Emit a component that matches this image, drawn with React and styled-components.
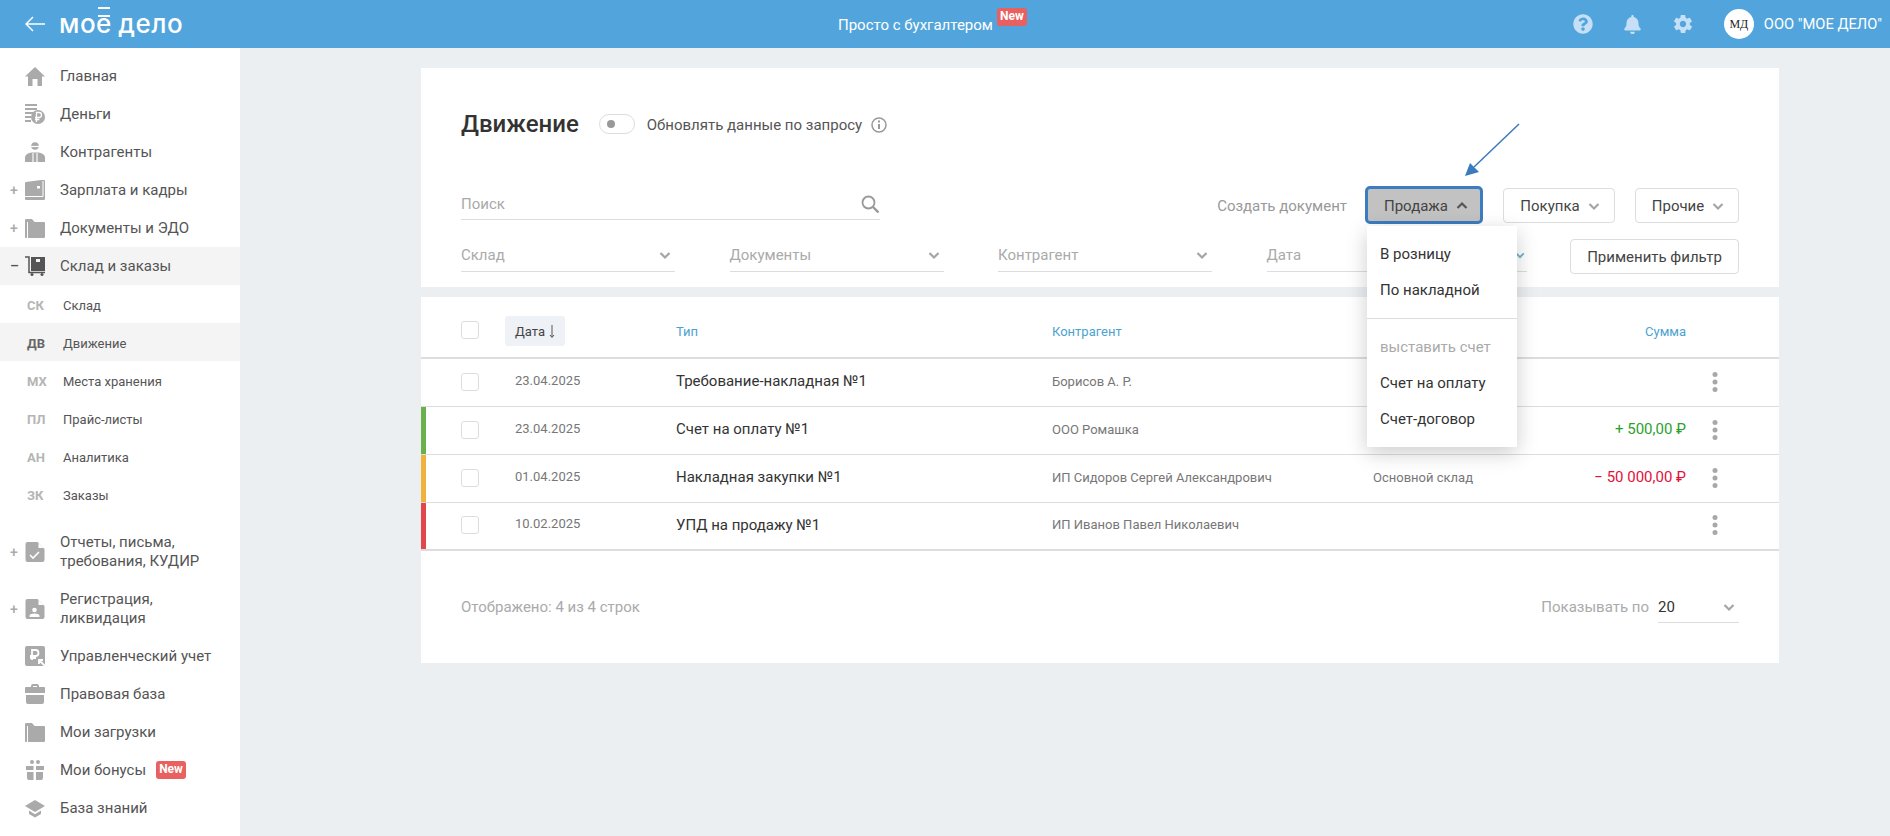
import React from 'react'
import styled, { createGlobalStyle } from 'styled-components'
import { FaQuestionCircle, FaBell } from 'react-icons/fa'
import { IoMdSettings } from 'react-icons/io'

const GlobalStyle = createGlobalStyle`
  * { box-sizing: border-box; }
  html, body { margin: 0; padding: 0; height: 100%; overflow: hidden; }
  body { font-family: Roboto, "Noto Sans", sans-serif; background: #eceff2; color: #333; }
`

const grey = '#aaaaaa'

const navIcons = {
  home: <path d="M10 1 20 10.500h-3V20h-4.500v-7h-5v7H3v-9.500H0z" />,
  money: (
    <>
      <path d="M0 0h12v2H0zM0 4h12v2H0zM0 8h8v2H0zM0 12h6v2H0zM0 16h6v2H0z" />
      <circle cx="13" cy="13" r="7" />
      <path d="M11.500 18v-9.500h2.500a2.500 2.500 0 0 1 0 5H10M10 15.500h4.500" fill="none" stroke="#fff" strokeWidth="1.300" />
    </>
  ),
  person: (
    <>
      <circle cx="10" cy="4" r="3.800" />
      <path d="M6 4.500h8" stroke="#fff" strokeWidth="1.200" />
      <path d="M0 20v-4.500C0 12.500 3.500 11 6.500 10.500h7c3 .5 6.500 2 6.500 5V20z" />
      <path d="M8 11v9M12 11v9" stroke="#fff" strokeWidth="1.100" />
    </>
  ),
  wallet: (
    <>
      <path d="M1 2 16 0h3a1 1 0 0 1 1 1v18a1 1 0 0 1-1 1H1a1 1 0 0 1-1-1V3a1 1 0 0 1 1-1z" />
      <path d="M0 16.500h18V1" fill="none" stroke="#fff" strokeWidth="1" />
      <rect x="12" y="6" width="3" height="2.500" fill="#fff" />
    </>
  ),
  folder: (
    <>
      <path d="M0 2a1 1 0 0 1 1-1h6l2.500 3H19a1 1 0 0 1 1 1v14a1 1 0 0 1-1 1H1a1 1 0 0 1-1-1z" />
      <path d="M2.500 20V4" stroke="#fff" strokeWidth="1" />
    </>
  ),
  cart: (
    <>
      <path d="M0 1h4v15.500h16" fill="none" stroke="#555" strokeWidth="1.500" />
      <path d="M6 1h14v14H6z" fill="#555" />
      <rect x="11" y="3" width="4" height="3" fill="#f4f4f4" />
      <circle cx="7" cy="18.500" r="1.500" fill="#555" />
      <circle cx="17" cy="18.500" r="1.500" fill="#555" />
    </>
  ),
  docCheck: (
    <>
      <path d="M2 0h10l7 7v11a2 2 0 0 1-2 2H2a2 2 0 0 1-2-2V2a2 2 0 0 1 2-2z" transform="translate(.5)" />
      <path d="M13.500 1v5h5z" fill="#fff" />
      <path d="m5 13 3 3 6-6" fill="none" stroke="#fff" strokeWidth="1.600" />
    </>
  ),
  docPerson: (
    <>
      <path d="M2 0h10l7 7v11a2 2 0 0 1-2 2H2a2 2 0 0 1-2-2V2a2 2 0 0 1 2-2z" transform="translate(.5)" />
      <path d="M13.500 1v5h5z" fill="#fff" />
      <circle cx="9.500" cy="11" r="2.300" fill="#fff" />
      <path d="M4.500 18v-1c0-1.800 2.500-2.500 5-2.500s5 .7 5 2.500v1z" fill="#fff" />
    </>
  ),
  ruble: (
    <>
      <rect width="20" height="20" rx="2" />
      <path d="M7 14V4h3.500a3 3 0 0 1 0 6H5M5 12h6" fill="none" stroke="#fff" strokeWidth="1.800" />
      <path d="M20 20 14 14M14 18v-4h4" fill="none" stroke="#fff" strokeWidth="1.800" />
    </>
  ),
  briefcase: (
    <path d="M6 3V2a2 2 0 0 1 2-2h4a2 2 0 0 1 2 2v1h5a1 1 0 0 1 1 1v5H0V4a1 1 0 0 1 1-1zm2 0h4V2H8zM1 11h18v7a2 2 0 0 1-2 2H3a2 2 0 0 1-2-2z" />
  ),
  gift: (
    <>
      <circle cx="7" cy="2" r="2" />
      <circle cx="13" cy="2" r="2" />
      <path d="M1 6h7.500v4H1zM11 6h8v4h-8zM2 12h6.500v8H4a2 2 0 0 1-2-2zM11 12h7v6a2 2 0 0 1-2 2h-5z" />
    </>
  ),
  cap: <path d="M10 2 20 8 10 14 0 8zM4 12.500l6 3.700 6-3.700V16l-6 3.500L4 16z" />,
}

const mainNav = [
  { icon: 'home', label: 'Главная' },
  { icon: 'money', label: 'Деньги' },
  { icon: 'person', label: 'Контрагенты' },
  { icon: 'wallet', label: 'Зарплата и кадры', toggle: '+' },
  { icon: 'folder', label: 'Документы и ЭДО', toggle: '+' },
  { icon: 'cart', label: 'Склад и заказы', toggle: '–', active: true },
]

const subNav = [
  { code: 'СК', label: 'Склад' },
  { code: 'ДВ', label: 'Движение', active: true },
  { code: 'МХ', label: 'Места хранения' },
  { code: 'ПЛ', label: 'Прайс-листы' },
  { code: 'АН', label: 'Аналитика' },
  { code: 'ЗК', label: 'Заказы' },
]

const lowerNav = [
  { icon: 'docCheck', label: 'Отчеты, письма, требования, КУДИР', toggle: '+', tall: true },
  { icon: 'docPerson', label: 'Регистрация, ликвидация', toggle: '+', tall: true },
  { icon: 'ruble', label: 'Управленческий учет' },
  { icon: 'briefcase', label: 'Правовая база' },
  { icon: 'folder', label: 'Мои загрузки' },
  { icon: 'gift', label: 'Мои бонусы', badge: true },
  { icon: 'cap', label: 'База знаний' },
]

const rows = [
  { date: '23.04.2025', type: 'Требование-накладная №1', agent: 'Борисов А. Р.' },
  { date: '23.04.2025', type: 'Счет на оплату №1', agent: 'ООО Ромашка', bar: '#6ab04c', sum: '+ 500,00 ₽', sumColor: '#2ca02c' },
  { date: '01.04.2025', type: 'Накладная закупки №1', agent: 'ИП Сидоров Сергей Александрович', store: 'Основной склад', bar: '#f0b23c', sum: '− 50 000,00 ₽', sumColor: '#e2103c' },
  { date: '10.02.2025', type: 'УПД на продажу №1', agent: 'ИП Иванов Павел Николаевич', bar: '#e2474c' },
]

const Chevron = ({ up, color = '#a5a5a5', size = 12 }) => (
  <svg width={size} height={size} viewBox="0 0 12 12" fill="none" stroke={color} strokeWidth="2.200" style={{ flexShrink: 0 }}>
    <path d={up ? 'M1.500 8 6 3.500 10.500 8' : 'M1.500 4 6 8.500 10.500 4'} />
  </svg>
)

const NavItem = ({ item }) => (
  <NavRow $active={item.active} $tall={item.tall}>
    <Toggle $active={item.active}>{item.toggle}</Toggle>
    <svg width="20" height="20" viewBox="0 0 20 20" fill={grey} style={{ flexShrink: 0 }}>
      {navIcons[item.icon]}
    </svg>
    <NavLabel $tall={item.tall}>{item.label}</NavLabel>
    {item.badge && <NavBadge>New</NavBadge>}
  </NavRow>
)

const App = () => {
  return (
    <>
      <GlobalStyle />
      <Header>
        <Brand>
          <svg width="20" height="16" viewBox="0 0 20 16" fill="none" stroke="#fff" strokeWidth="1.500">
            <path d="M20 8H1M8 1 1 8l7 7" />
          </svg>
          <Logo>мо<LogoE>е</LogoE> дело</Logo>
        </Brand>
        <Promo>
          Просто с бухгалтером
          <PromoBadge>New</PromoBadge>
        </Promo>
        <UserBar>
          <FaQuestionCircle size={20} color="#c5e0f6" />
          <FaBell size={19} color="#c5e0f6" />
          <IoMdSettings size={22} color="#c5e0f6" />
          <User>
            <Avatar>МД</Avatar>
            ООО "МОЕ ДЕЛО"
          </User>
        </UserBar>
      </Header>
      <Layout>
        <Sidebar>
          {mainNav.map((item) => <NavItem key={item.label} item={item} />)}
          {subNav.map((item) => (
            <SubRow key={item.code} $active={item.active}>
              <SubCode $active={item.active}>{item.code}</SubCode>
              {item.label}
            </SubRow>
          ))}
          <LowerNav>
            {lowerNav.map((item) => <NavItem key={item.label} item={item} />)}
          </LowerNav>
        </Sidebar>
        <Main>
          <TopCard>
            <TitleRow>
              <Title>Движение</Title>
              <SwitchTrack />
              <SwitchLabel>Обновлять данные по запросу</SwitchLabel>
              <svg width="16" height="16" viewBox="0 0 16 16" fill="none" stroke="#999" strokeWidth="1.500" style={{ marginTop: 2 }}>
                <circle cx="8" cy="8" r="7" />
                <path d="M8 7v5" strokeWidth="2" />
                <path d="M8 3.500v2" strokeWidth="2" />
              </svg>
            </TitleRow>
            <Toolbar>
              <SearchField>
                Поиск
                <svg width="18" height="18" viewBox="0 0 18 18" fill="none" stroke="#999" strokeWidth="1.800">
                  <circle cx="7.500" cy="7.500" r="6" />
                  <path d="m12 12 5.500 5.500" strokeWidth="2.400" />
                </svg>
              </SearchField>
              <CreateGroup>
                <CreateLabel>Создать документ</CreateLabel>
                <MenuAnchor>
                  <Arrow width="60" height="60" viewBox="0 0 60 60">
                    <path d="M54 6 9 49" fill="none" stroke="#3a7abf" strokeWidth="1.500" />
                    <path d="M0 58 5 45 14 54z" fill="#3a7abf" />
                  </Arrow>
                  <ActionButton $open $width={118}>
                    Продажа
                    <Chevron up color="#555" />
                  </ActionButton>
                  <Dropdown>
                    <MenuItem>В розницу</MenuItem>
                    <MenuItem>По накладной</MenuItem>
                    <MenuDivider />
                    <MenuItem $muted>выставить счет</MenuItem>
                    <MenuItem>Счет на оплату</MenuItem>
                    <MenuItem>Счет-договор</MenuItem>
                  </Dropdown>
                </MenuAnchor>
                <ActionButton $width={112}>Покупка <Chevron /></ActionButton>
                <ActionButton $width={104}>Прочие <Chevron /></ActionButton>
              </CreateGroup>
            </Toolbar>
            <FilterRow>
              <FilterField>Склад <Chevron /></FilterField>
              <FilterField>Документы <Chevron /></FilterField>
              <FilterField>Контрагент <Chevron /></FilterField>
              <FilterField $wide>Дата <Chevron color="#6fb5c9" size={10} /></FilterField>
              <ApplyButton>Применить фильтр</ApplyButton>
            </FilterRow>
          </TopCard>
          <TableCard>
            <HeadRow>
              <Checkbox />
              <div>
                <DatePill>
                  Дата
                  <svg width="8" height="13" viewBox="0 0 8 13" fill="none" stroke="#555" strokeWidth="1">
                    <path d="M4 0v12M2 10l2 2.500L6 10" />
                  </svg>
                </DatePill>
              </div>
              <HeadCell>Тип</HeadCell>
              <HeadCell>Контрагент</HeadCell>
              <StoreSum>
                <HeadCell>Склад</HeadCell>
                <HeadCell>Сумма</HeadCell>
              </StoreSum>
            </HeadRow>
            {rows.map((row, i) => (
              <Row key={row.type} $bar={row.bar} $last={i === rows.length - 1}>
                <Checkbox />
                <DateCell>{row.date}</DateCell>
                <TypeCell>{row.type}</TypeCell>
                <AgentCell>{row.agent}</AgentCell>
                <StoreSum>
                  <AgentCell>{row.store}</AgentCell>
                  <SumCell $color={row.sumColor}>{row.sum}</SumCell>
                </StoreSum>
                <DotsButton>
                  <svg width="6" height="20" viewBox="0 0 6 20" fill="#a8a8a8">
                    <circle cx="3" cy="2.500" r="2.500" />
                    <circle cx="3" cy="10" r="2.500" />
                    <circle cx="3" cy="17.500" r="2.500" />
                  </svg>
                </DotsButton>
              </Row>
            ))}
            <Footer>
              Отображено: 4 из 4 строк
              <PageSize>
                Показывать по
                <PageSelect>20 <Chevron /></PageSelect>
              </PageSize>
            </Footer>
          </TableCard>
        </Main>
      </Layout>
    </>
  )
}

export default App

const Header = styled.header`
  height: 48px;
  background: #52a5dc;
  color: #fff;
  display: grid;
  grid-template-columns: 838px auto 1fr;
  align-items: center;
`

const Brand = styled.div`
  display: flex;
  align-items: center;
  padding-left: 25px;
  gap: 14px;
`

const Logo = styled.span`
  font-family: Inter, sans-serif;
  font-weight: 500;
  font-size: 26px;
  line-height: 32px;
  letter-spacing: 0.5px;
  word-spacing: -1px;
  color: #fff;
`

const LogoE = styled.span`
  position: relative;
  &::before {
    content: '';
    position: absolute;
    left: 2px;
    right: 2px;
    top: -1px;
    height: 6px;
    border-top: 2px solid #fff;
    border-bottom: 2px solid #fff;
  }
`

const Promo = styled.div`
  display: flex;
  font-size: 15px;
  line-height: 24px;
  margin-top: 2px;
  position: relative;
  padding-right: 34px;
`

const PromoBadge = styled.span`
  position: absolute;
  right: 0;
  top: -5px;
  width: 30px;
  height: 18px;
  border-radius: 3px;
  background: #e86060;
  font-size: 12px;
  font-weight: 700;
  line-height: 17px;
  text-align: center;
`

const UserBar = styled.div`
  display: flex;
  align-items: center;
  justify-content: flex-end;
  gap: 30px;
  padding-right: 8px;
`

const User = styled.div`
  display: flex;
  align-items: center;
  gap: 10px;
  font-size: 14.7px;
`

const Avatar = styled.div`
  width: 30px;
  height: 30px;
  border-radius: 50%;
  background: #fff;
  color: #222;
  display: flex;
  align-items: center;
  justify-content: center;
  font-family: "Liberation Serif", serif;
  font-size: 12px;
`

const Layout = styled.div`
  display: flex;
  height: 788px;
`

const Sidebar = styled.nav`
  width: 240px;
  flex-shrink: 0;
  background: #fff;
  padding-top: 9px;
`

const NavRow = styled.div`
  display: flex;
  align-items: center;
  height: ${(p) => (p.$tall ? '56.5px' : '38px')};
  padding-left: 10px;
  background: ${(p) => (p.$active ? '#f4f4f4' : 'transparent')};
`

const Toggle = styled.span`
  width: 15px;
  flex-shrink: 0;
  font-size: 14px;
  font-weight: 500;
  color: ${(p) => (p.$active ? '#555' : '#aaa')};
`

const NavLabel = styled.span`
  margin-left: 15px;
  font-size: 15px;
  line-height: 19px;
  color: #555;
  max-width: ${(p) => (p.$tall ? '150px' : 'none')};
`

const NavBadge = styled.span`
  margin-left: 10px;
  width: 30px;
  height: 18px;
  border-radius: 3px;
  background: #e86060;
  color: #fff;
  font-size: 12px;
  font-weight: 700;
  line-height: 17px;
  text-align: center;
`

const SubRow = styled.div`
  display: flex;
  align-items: center;
  height: 38px;
  padding: 2px 0 0 27px;
  font-size: 13px;
  color: #555;
  background: ${(p) => (p.$active ? '#f4f4f4' : 'transparent')};
`

const SubCode = styled.span`
  width: 36px;
  font-weight: 700;
  font-size: 13px;
  color: ${(p) => (p.$active ? '#666' : '#b5b5b5')};
`

const LowerNav = styled.div`
  margin-top: 11px;
`

const Main = styled.main`
  flex: 1;
  padding: 20px 0 0 181px;
`

const TopCard = styled.section`
  width: 1358px;
  height: 219px;
  background: #fff;
  padding: 40px 40px 0;
`

const TitleRow = styled.div`
  display: flex;
  align-items: center;
  height: 32px;
`

const Title = styled.h1`
  margin: 0 20px 0 0;
  font-size: 24px;
  font-weight: 500;
  color: #333;
`

const SwitchTrack = styled.div`
  width: 36px;
  height: 20px;
  border: 1px solid #ddd;
  border-radius: 10px;
  position: relative;
  &::before {
    content: '';
    position: absolute;
    left: 7px;
    top: 5px;
    width: 8px;
    height: 8px;
    border-radius: 50%;
    background: #999;
  }
`

const SwitchLabel = styled.span`
  margin: 2px 9px 0 12px;
  font-size: 15px;
  color: #555;
`

const Toolbar = styled.div`
  display: flex;
  justify-content: space-between;
  margin-top: 46px;
  height: 38px;
`

const SearchField = styled.div`
  width: 419px;
  height: 34px;
  border-bottom: 1px solid #ddd;
  display: flex;
  align-items: center;
  justify-content: space-between;
  padding: 2px 1px 0 0;
  font-size: 15px;
  color: #aaa;
`

const CreateGroup = styled.div`
  display: flex;
  align-items: center;
  gap: 20px;
`

const CreateLabel = styled.span`
  font-size: 15px;
  color: #999;
  margin: 2px -2px 0 0;
`

const MenuAnchor = styled.div`
  position: relative;
`

const Arrow = styled.svg`
  position: absolute;
  left: 100px;
  top: -68px;
`

const ActionButton = styled.button`
  display: flex;
  align-items: center;
  justify-content: center;
  gap: 8px;
  width: ${(p) => p.$width}px;
  height: ${(p) => (p.$open ? '38px' : '35px')};
  padding: 2px 0 0 ${(p) => (p.$open ? '4px' : '2px')};
  background: ${(p) => (p.$open ? '#c2c2c2' : '#fff')};
  border: ${(p) => (p.$open ? '3px solid #3c7cc0' : '1px solid #ddd')};
  border-radius: ${(p) => (p.$open ? '5px' : '4px')};
  font-family: inherit;
  font-size: 15px;
  color: #444;
`

const Dropdown = styled.div`
  position: absolute;
  z-index: 5;
  left: 2px;
  top: 40px;
  width: 150px;
  padding: 10px 0;
  background: #fff;
  box-shadow: 0 6px 20px rgba(0, 0, 0, 0.2);
`

const MenuItem = styled.div`
  height: 36px;
  line-height: 36px;
  padding-left: 13px;
  font-size: 15px;
  color: ${(p) => (p.$muted ? '#aaa' : '#333')};
`

const MenuDivider = styled.div`
  height: 1px;
  background: #ddd;
  margin: 10px 0;
`

const FilterRow = styled.div`
  display: flex;
  align-items: flex-start;
  gap: 54.5px;
  margin-top: 15px;
`

const FilterField = styled.div`
  flex-shrink: 0;
  width: ${(p) => (p.$wide ? '260px' : '214px')};
  margin-right: ${(p) => (p.$wide ? '-12px' : '0')};
  height: 33px;
  border-bottom: 1px solid #ddd;
  display: flex;
  align-items: center;
  justify-content: space-between;
  padding-right: ${(p) => (p.$wide ? '2px' : '4px')};
  font-size: 15px;
  color: #aaa;
`

const ApplyButton = styled.button`
  margin-left: auto;
  flex-shrink: 0;
  height: 35px;
  width: 169px;
  background: #fff;
  border: 1px solid #ddd;
  border-radius: 4px;
  font-family: inherit;
  font-size: 15px;
  color: #444;
`

const TableCard = styled.section`
  width: 1358px;
  margin-top: 10px;
  background: #fff;
`

const gridColumns = '44px 171px 376px 321px 313px 1fr'

const HeadRow = styled.div`
  display: grid;
  grid-template-columns: ${gridColumns};
  align-items: center;
  height: 62px;
  padding: 8px 0 0 40px;
  border-bottom: 2px solid #ddd;
`

const HeadCell = styled.span`
  font-size: 13px;
  color: #4ba3cf;
`

const DatePill = styled.span`
  display: inline-flex;
  align-items: center;
  gap: 3px;
  height: 30px;
  padding: 0 9px 0 10px;
  border-radius: 3px;
  background: #eef1f6;
  font-size: 13px;
  color: #444;
`

const Row = styled.div`
  display: grid;
  grid-template-columns: ${gridColumns};
  align-items: center;
  height: 48px;
  padding-left: 40px;
  border-bottom: ${(p) => (p.$last ? '2px' : '1px')} solid #ddd;
  box-shadow: ${(p) => (p.$bar ? `inset 5px 0 0 ${p.$bar}` : 'none')};
`

const Checkbox = styled.div`
  width: 18px;
  height: 18px;
  margin-top: -2px;
  border: 1px solid #ddd;
  border-radius: 3px;
  background: #fff;
`

const DateCell = styled.span`
  padding-left: 10px;
  margin-top: -5px;
  font-size: 13px;
  color: #777;
`

const TypeCell = styled.span`
  margin-top: -3px;
  font-size: 15px;
  color: #333;
`

const AgentCell = styled.span`
  margin-top: -3px;
  font-size: 13px;
  color: #777;
`

const StoreSum = styled.div`
  display: flex;
  justify-content: space-between;
  align-items: center;
`

const SumCell = styled.span`
  margin-top: -4px;
  font-size: 15px;
  color: ${(p) => p.$color || '#333'};
`

const DotsButton = styled.span`
  display: flex;
  margin: -2px 0 0 26px;
`

const Footer = styled.div`
  height: 112px;
  display: flex;
  align-items: center;
  justify-content: space-between;
  padding: 0 40px;
  font-size: 15px;
  color: #aaa;
`

const PageSize = styled.div`
  display: flex;
  align-items: center;
  gap: 9px;
`

const PageSelect = styled.div`
  width: 81px;
  height: 32px;
  border-bottom: 1px solid #ddd;
  display: flex;
  align-items: center;
  justify-content: space-between;
  padding-right: 4px;
  font-size: 15px;
  color: #333;
`
